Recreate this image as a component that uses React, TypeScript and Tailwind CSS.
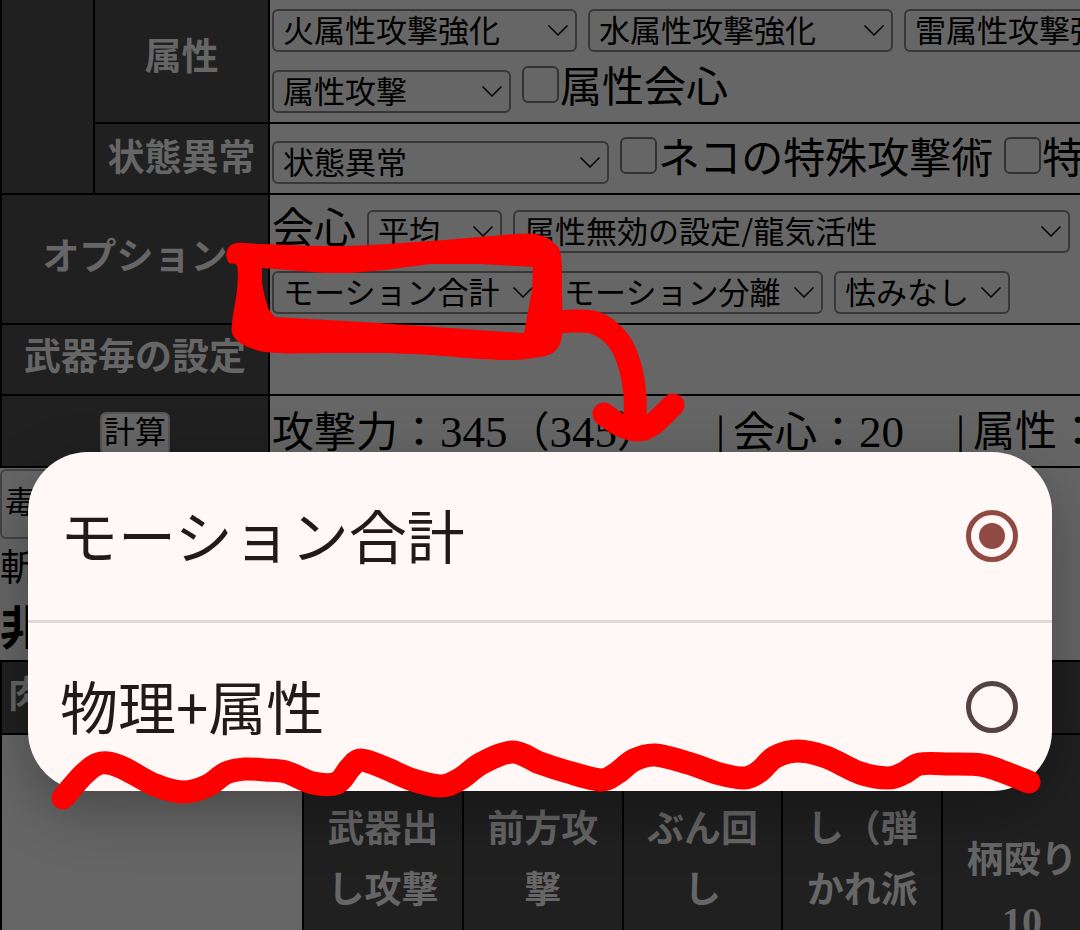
import { useState } from 'react';

type Point = [number, number];

// Smooth line through a list of points (Catmull-Rom to bezier)
const smoothPath = (points: Point[]) => {
  let d = `M${points[0][0]} ${points[0][1]}`;
  for (let i = 0; i < points.length - 1; i++) {
    const p0 = points[i - 1] || points[i];
    const p1 = points[i];
    const p2 = points[i + 1];
    const p3 = points[i + 2] || p2;
    d += `C${p1[0] + (p2[0] - p0[0]) / 6} ${p1[1] + (p2[1] - p0[1]) / 6} ${p2[0] - (p3[0] - p1[0]) / 6} ${p2[1] - (p3[1] - p1[1]) / 6} ${p2[0]} ${p2[1]}`;
  }
  return d;
};

const wave: Point[] = [
  [63, 798], [84, 774], [101, 763], [121, 767], [155, 785], [183, 792], [207, 786], [226, 773],
  [245, 769], [265, 770], [286, 772], [313, 783], [337, 783], [350, 768], [361, 760], [385, 768],
  [413, 780], [441, 786], [460, 779], [482, 763], [513, 752], [540, 763], [568, 772], [601, 780],
  [617, 773], [634, 760], [655, 755], [688, 763], [720, 774], [745, 778], [760, 771], [775, 757],
  [798, 751], [826, 757], [860, 773], [888, 778], [904, 773], [920, 764], [950, 764], [981, 765],
  [1001, 771], [1029, 782],
];

const frameOuter: Point[] = [
  [226, 255], [229, 247], [238, 243], [262, 244], [344, 246], [430, 241], [517, 234], [540, 235],
  [554, 243], [561, 255], [562, 290], [562, 334], [556, 350], [540, 357], [499, 360], [413, 354],
  [344, 353], [275, 353], [248, 347], [234, 337], [232, 323], [237, 290], [237, 266], [229, 263],
  [226, 255],
];

const frameInner: Point[] = [
  [262, 268], [300, 271], [325, 273], [350, 273], [385, 270], [430, 264], [480, 264], [533, 267],
  [532, 290], [524, 333], [492, 331], [379, 323], [275, 317], [269, 310], [265, 298], [262, 283],
  [262, 268],
];

const arrowLine: Point[] = [
  [552, 323], [572, 321], [592, 322], [608, 330], [622, 346], [631, 370], [635, 395], [635, 425],
];

const arrowHead: Point[] = [[604, 414], [620, 425], [638, 430], [652, 425], [673, 405]];

interface SelectBoxProps {
  label: string;
  width: string;
}

const SelectBox = ({ label, width }: SelectBoxProps) => (
  <div className={`relative shrink-0 font-['Noto_Sans_CJK_JP',sans-serif] ${width}`}>
    <select
      aria-label={label}
      className="block h-[43px] w-full appearance-none rounded-md border-2 border-[#383838] bg-[#666] pb-1 pl-[9px] text-[31px] leading-[35px] text-black"
    >
      <option>{label}</option>
    </select>
    <svg
      viewBox="0 0 20 12"
      className="pointer-events-none absolute top-4 right-[9px] h-3 w-5"
      fill="none"
      stroke="black"
      strokeWidth="1.5"
    >
      <path d="M0.500 0.500L10 10L19.500 0.500" />
    </svg>
  </div>
);

const CheckBox = ({ label }: { label: string }) => (
  <label className="mb-1.5 flex shrink-0 items-center">
    <input
      type="checkbox"
      className="mr-px mb-2 size-[37px] shrink-0 appearance-none rounded-md border-2 border-[#333]"
    />
    {label}
  </label>
);

const Line = ({ children }: { children: React.ReactNode }) => (
  <div className="flex h-[61px] items-center gap-[11px]">{children}</div>
);

const Num = ({ children }: { children: React.ReactNode }) => <span className="text-[45px]">{children}</span>;

const th = 'border-2 border-black bg-[#202020] p-0 text-center text-[37px] leading-[61px] font-bold text-[#666]';
const td = 'border-2 border-r-0 border-black p-0 pl-[2px]';

const SettingsTable = () => (
  <table className="w-full table-fixed border-collapse">
    <colgroup>
      <col className="w-[93px]" />
      <col className="w-[175px]" />
      <col />
    </colgroup>
    <tbody>
      <tr>
        <th rowSpan={2} className={`${th} border-t-0`}></th>
        <th className={`${th} border-t-0 pb-2`}>属性</th>
        <td className={`${td} border-t-0`}>
          <Line>
            <SelectBox label="火属性攻撃強化" width="w-[305px]" />
            <SelectBox label="水属性攻撃強化" width="w-[305px]" />
            <SelectBox label="雷属性攻撃強化" width="w-[305px]" />
          </Line>
          <Line>
            <SelectBox label="属性攻撃" width="w-[239px]" />
            <CheckBox label="属性会心" />
          </Line>
        </td>
      </tr>
      <tr>
        <th className={th}>状態異常</th>
        <td className={`${td} pt-2`}>
          <Line>
            <SelectBox label="状態異常" width="w-[337px]" />
            <CheckBox label="ネコの特殊攻撃術" />
            <CheckBox label="特" />
          </Line>
        </td>
      </tr>
      <tr>
        <th colSpan={2} className={`${th} pb-1`}>オプション</th>
        <td className={`${td} pt-1.5`}>
          <Line>
            <span className="mb-1 shrink-0">会心</span>
            <SelectBox label="平均" width="w-[135px]" />
            <SelectBox label="属性無効の設定/龍気活性" width="w-[557px]" />
          </Line>
          <Line>
            <SelectBox label="モーション合計" width="w-[270px]" />
            <SelectBox label="モーション分離" width="w-[270px]" />
            <SelectBox label="怯みなし" width="w-[176px]" />
          </Line>
        </td>
      </tr>
      <tr className="h-[71px]">
        <th colSpan={2} className={`${th} pb-1`}>武器毎の設定</th>
        <td className={td}></td>
      </tr>
      <tr className="h-[72px]">
        <th colSpan={2} className={`${th} pt-1`}>
          <button className="mx-auto block h-[43px] w-[70px] rounded-md border-2 border-[#555] bg-[#666] text-[31px] leading-[38px] font-normal text-black">
            計算
          </button>
        </th>
        <td className={`${td} pt-1`}>
          <div className="flex whitespace-pre">
            <span>攻撃力：<Num>345</Num>（<Num>345</Num>）　</span>
            <span className="mr-2 ml-9"><Num>|</Num></span>
            <span>会心：<Num>20</Num>　</span>
            <span className="mr-2 ml-2.5"><Num>|</Num></span>
            <span>属性：</span>
          </div>
        </td>
      </tr>
    </tbody>
  </table>
);

const motions = [
  ['武器出', 'し攻撃'],
  ['前方攻', '撃'],
  ['ぶん回', 'し'],
  ['し（弾', 'かれ派'],
];

const MotionTable = () => (
  <table className="w-[1103px] table-fixed border-collapse">
    <colgroup>
      <col className="w-[302px]" />
      <col span={5} />
    </colgroup>
    <tbody>
      <tr className="h-[73px]">
        <th colSpan={6} className="border-2 border-black bg-[#202020] p-0 pb-1 pl-[6px] text-left text-[37px] font-bold text-[#666]">
          肉
        </th>
      </tr>
      <tr className="h-[250px] align-top">
        <td className="border-2 border-black"></td>
        {motions.map(([first, second]) => (
          <th key={first} className={`${th} pt-16`}>
            {first}
            <br />
            {second}
          </th>
        ))}
        <th className={`${th} pt-[95px]`}>
          柄殴り
          <br />
          <span className="text-[40px]">10</span>
        </th>
      </tr>
    </tbody>
  </table>
);

const options = ['モーション合計', '物理+属性'];

const OptionDialog = () => {
  const [selected, setSelected] = useState(options[0]);

  return (
    <div
      role="dialog"
      className="absolute inset-x-7 top-[452px] divide-y-[3px] divide-[#ded8d8] overflow-hidden rounded-[60px] bg-[#fff8f7] font-['Noto_Sans_CJK_JP',sans-serif] shadow-[0_20px_60px_rgba(0,0,0,0.3)]"
    >
      {options.map((option) => (
        <label
          key={option}
          className="flex h-[168px] items-center justify-between pr-[34px] pb-1 pl-8 text-[58px] leading-[84px] text-[#231919] [&:first-child]:h-[171px]"
        >
          {option}
          <input
            type="radio"
            name="motion"
            checked={selected === option}
            onChange={() => setSelected(option)}
            className="mt-1 flex size-[52px] appearance-none items-center justify-center rounded-full border-[5px] border-[#534341] checked:border-[#904a43] checked:before:size-[26px] checked:before:rounded-full checked:before:bg-[#904a43]"
          />
        </label>
      ))}
    </div>
  );
};

// Hand drawn marks over the page
const Marks = () => (
  <svg
    width="1080"
    height="930"
    className="pointer-events-none absolute top-0 left-0"
    fill="none"
    stroke="#f00"
    strokeWidth="23"
    strokeLinecap="round"
    strokeLinejoin="round"
  >
    <path
      d={`${smoothPath(frameOuter)}Z M${frameInner.map((p) => p.join(' ')).join('L')}Z`}
      fill="#f00"
      fillRule="evenodd"
      stroke="none"
    />
    <path d={smoothPath(arrowLine)} />
    <path d={smoothPath(arrowHead)} />
    <path d={smoothPath(wave)} />
  </svg>
);

const App = () => {
  return (
    <div
      lang="ja"
      className="relative h-screen overflow-hidden bg-[#666] font-['Liberation_Serif','Noto_Sans_CJK_JP',serif] text-[42px] leading-[61px] text-black"
    >
      <SettingsTable />
      <button className="mt-px block h-[70px] w-[200px] rounded-md border-2 border-[#444] bg-[#666] pb-1 pl-[3px] text-left text-[31px]">
        毒
      </button>
      <p className="h-[56px] text-[37px] leading-[60px]">斬</p>
      <h2 className="h-[65px] text-[46px] leading-[68px] font-bold">非</h2>
      <MotionTable />
      <OptionDialog />
      <Marks />
    </div>
  );
};

export default App;
